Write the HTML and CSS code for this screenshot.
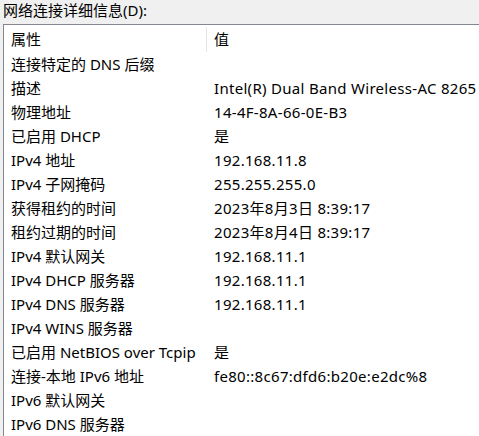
FILE: index.html
```html
<!DOCTYPE html>
<html lang="zh">
<head>
<meta charset="utf-8">
<link rel="stylesheet" href="styles.css">
</head>
<body>
<div class="title">网络连接详细信息(D):</div>
<div class="list">
  <div class="header">
    <div class="hcell c1">属性</div>
    <div class="hcell c2">值</div>
  </div>
  <div class="row"><div class="c1">连接特定的 DNS 后缀</div><div class="c2"></div></div>
  <div class="row"><div class="c1">描述</div><div class="c2">Intel(R) Dual Band Wireless-AC 8265</div></div>
  <div class="row"><div class="c1">物理地址</div><div class="c2">14-4F-8A-66-0E-B3</div></div>
  <div class="row"><div class="c1">已启用 DHCP</div><div class="c2">是</div></div>
  <div class="row"><div class="c1">IPv4 地址</div><div class="c2">192.168.11.8</div></div>
  <div class="row"><div class="c1">IPv4 子网掩码</div><div class="c2">255.255.255.0</div></div>
  <div class="row"><div class="c1">获得租约的时间</div><div class="c2">2023年8月3日 8:39:17</div></div>
  <div class="row"><div class="c1">租约过期的时间</div><div class="c2">2023年8月4日 8:39:17</div></div>
  <div class="row"><div class="c1">IPv4 默认网关</div><div class="c2">192.168.11.1</div></div>
  <div class="row"><div class="c1">IPv4 DHCP 服务器</div><div class="c2">192.168.11.1</div></div>
  <div class="row"><div class="c1">IPv4 DNS 服务器</div><div class="c2">192.168.11.1</div></div>
  <div class="row"><div class="c1">IPv4 WINS 服务器</div><div class="c2"></div></div>
  <div class="row"><div class="c1">已启用 NetBIOS over Tcpip</div><div class="c2">是</div></div>
  <div class="row"><div class="c1">连接-本地 IPv6 地址</div><div class="c2">fe80::8c67:dfd6:b20e:e2dc%8</div></div>
  <div class="row"><div class="c1">IPv6 默认网关</div><div class="c2"></div></div>
  <div class="row"><div class="c1">IPv6 DNS 服务器</div><div class="c2"></div></div>
</div>
</body>
</html>
```
FILE: styles.css
```css
html, body {
  margin: 0;
  padding: 0;
  background: #f0f0f0;
  font-family: "Noto Sans", "Noto Sans CJK SC", sans-serif;
  font-size: 15px;
  color: #000;
  overflow: hidden;
}
.title {
  height: 24px;
  line-height: 21px;
  padding-left: 3px;
}
.list {
  margin-left: 3px;
  border-top: 1px solid #828790;
  border-left: 1px solid #828790;
  background: #fff;
  height: 420px;
}
.header {
  display: flex;
  height: 27px;
  align-items: center;
}
.hcell {
  height: 25px;
  line-height: 25px;
  margin-top: 1px;
}
.c1 {
  width: 195px;
  padding-left: 7px;
  white-space: nowrap;
}
.hcell.c2 {
  border-left: 1px solid #e5e5e5;
}
.c2 {
  padding-left: 7px;
  white-space: nowrap;
}
.row {
  display: flex;
  height: 24px;
  line-height: 24px;
}
.row .c2 {
  padding-left: 8px;
  letter-spacing: 0.3px;
}
```
